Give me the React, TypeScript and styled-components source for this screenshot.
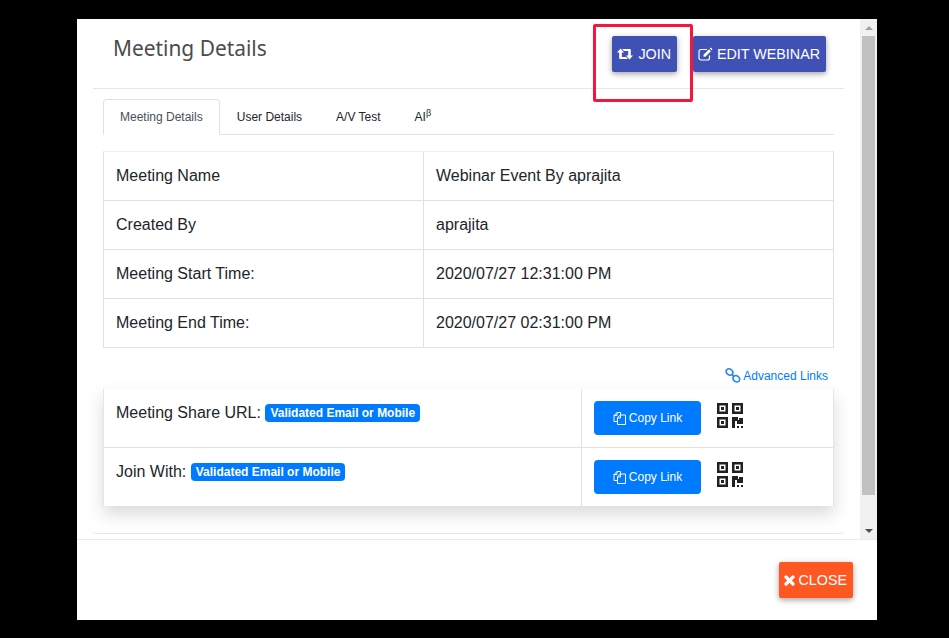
import { FC, ReactNode } from "react"
import styled, { createGlobalStyle } from "styled-components"

const GlobalStyle = createGlobalStyle`
    html, body {
        margin: 0;
        padding: 0;
        background: #000;
        font-family: "Liberation Sans", Arial, sans-serif;
        color: #212529;
    }
`

const Page = styled.div`
    position: relative;
    width: 949px;
    height: 638px;
    overflow: hidden;
    box-sizing: border-box;
    padding: 19px 72px 18px 77px;
    background: #000;
`

const Modal = styled.div`
    display: flex;
    flex-direction: column;
    width: 800px;
    height: 601px;
    background: #fff;
`

const ModalBody = styled.div`
    display: flex;
    height: 520px;
    overflow: hidden;
`

const ScrollArea = styled.div`
    flex: 1;
    padding: 0 16px;
`

const Card = styled.div`
    height: 514px;
    border-bottom: 1px solid #e4e6e9;
    border-radius: 0 0 4px 4px;
    box-shadow: 1px 0 1px -1px #eee, -1px 0 1px -1px #eee;
`

const CardHeader = styled.div`
    display: flex;
    justify-content: space-between;
    height: 70px;
    box-sizing: border-box;
    padding: 0 18px 0 20px;
    border-bottom: 1px solid #e6e6e6;
`

const Title = styled.h4`
    margin: 14px 0 0;
    font-family: "Noto Sans", sans-serif;
    font-size: 20.9px;
    line-height: 30px;
    font-weight: 400;
    color: #4b4b4b;
`

const HeaderActions = styled.div`
    display: flex;
    gap: 16px;
    padding-top: 17px;
`

const RaisedButton = styled.button<{ $bg: string }>`
    display: inline-flex;
    align-items: center;
    justify-content: center;
    gap: 4px;
    height: 36px;
    padding: 0 6px 0 5px;
    border: 0;
    border-radius: 2px;
    background: ${p => p.$bg};
    color: #fff;
    font-family: inherit;
    font-size: 14.3px;
    box-shadow: 0 2px 5px rgba(0, 0, 0, 0.26), 0 2px 8px rgba(0, 0, 0, 0.12);
`

const CardBody = styled.div`
    padding: 10px 10px 0;
`

const Tabs = styled.div`
    display: flex;
    height: 36px;
    box-sizing: border-box;
    border-bottom: 1px solid #dee2e6;
`

const Tab = styled.div<{ $active?: boolean }>`
    box-sizing: border-box;
    height: 36px;
    padding: 9px 16px 0;
    font-size: 12px;
    line-height: 16px;
    border: 1px solid ${p => (p.$active ? "#dee2e6" : "transparent")};
    border-bottom-color: ${p => (p.$active ? "#fff" : "transparent")};
    border-radius: 4px 4px 0 0;
    background: ${p => (p.$active ? "#fff" : "transparent")};
    color: ${p => (p.$active ? "#495057" : "#212529")};

    sup {
        font-size: 9px;
        line-height: 0;
    }
`

const DetailsTable = styled.div`
    margin-top: 16px;
    border: 1px solid #dee2e6;
    border-top-color: #eee;
`

const DetailRow = styled.div`
    display: grid;
    grid-template-columns: 319px 1fr;
    height: 49px;
    box-sizing: border-box;

    &:first-child {
        height: 48px;
    }

    & + & {
        border-top: 1px solid #dee2e6;
    }
`

const Cell = styled.div`
    padding: 0 12px;
    font-size: 16px;
    line-height: 48px;

    & + & {
        border-left: 1px solid #dee2e6;
    }
`

const AdvancedRow = styled.div`
    display: flex;
    justify-content: flex-end;
    align-items: center;
    gap: 2px;
    height: 41px;
    box-sizing: border-box;
    padding: 14px 6px 0 0;
    font-size: 12px;
    color: #007bff;
`

const LinksTable = styled.div`
    border: 1px solid #e3e5e8;
    border-width: 0 1px;
    box-shadow: 0 8px 16px rgba(0, 0, 0, 0.15);
    height: 117px;
`

const LinkRow = styled.div`
    display: grid;
    grid-template-columns: 477px 1fr;
    height: 58px;
    box-sizing: border-box;

    & + & {
        border-top: 1px solid #dee2e6;
        height: 59px;
    }
`

const LinkLabel = styled.div`
    padding: 14px 12px 0;
    font-size: 16px;
    line-height: 20px;
`

const Badge = styled.span`
    display: inline-block;
    padding: 0 5px;
    border-radius: 4px;
    background: #007bff;
    color: #fff;
    font-size: 12px;
    font-weight: 700;
    line-height: 18px;
    vertical-align: 1px;
`

const LinkActions = styled.div`
    display: flex;
    align-items: flex-start;
    gap: 16px;
    padding: 12px 12px 0;
    border-left: 1px solid #dee2e6;
`

const CopyButton = styled.button`
    display: inline-flex;
    align-items: center;
    justify-content: center;
    gap: 3px;
    width: 107px;
    height: 34px;
    padding: 0 0 1px;
    border: 0;
    border-radius: 4px;
    background: #007bff;
    color: #fff;
    font-family: inherit;
    font-size: 12px;
`

const QrIcon = styled.svg`
    width: 26px;
    height: 26px;
    margin-top: 2px;
`

const Scrollbar = styled.div`
    display: flex;
    flex-direction: column;
    align-items: center;
    width: 17px;
    background: #f1f1f1;
`

const ScrollArrow = styled.div<{ $down?: boolean }>`
    display: flex;
    align-items: center;
    justify-content: center;
    height: 17px;

    &::after {
        content: "";
        border-left: 4px solid transparent;
        border-right: 4px solid transparent;
        ${p =>
            p.$down
                ? "border-top: 4px solid #505050;"
                : "border-bottom: 4px solid #a3a3a3;"}
    }
`

const ScrollThumb = styled.div`
    width: 13px;
    height: 459px;
    background: #c1c1c1;
`

const ScrollGap = styled.div`
    flex: 1;
`

const Footer = styled.div`
    flex: 1;
    display: flex;
    justify-content: flex-end;
    align-items: flex-start;
    padding: 22px 24px 0 0;
    border-top: 1px solid #e9ecef;
`

// the red box somebody drew over the screenshot
const Annotation = styled.div`
    position: absolute;
    left: 593px;
    top: 24px;
    width: 100px;
    height: 78px;
    box-sizing: border-box;
    border: 3px solid #f5163f;
    border-radius: 2px;
    pointer-events: none;
`

const RetweetIcon: FC = () => (
    <svg width="17" height="12" viewBox="0 0 17 12" fill="#fff">
        <path d="M0 4.5L3.5.5 7 4.5H4.8V9H9l2 2H3a.8.8 0 0 1-.8-.8V4.5z" />
        <path d="M16 7.5l-3.5 4-3.5-4h2.2V3H7L5 1h8a.8.8 0 0 1 .8.8v5.7z" />
    </svg>
)

const EditIcon: FC = () => (
    <svg width="15" height="14" viewBox="0 0 15 14" fill="none">
        <path d="M11.5 8.5V11a2 2 0 0 1-2 2H3a2 2 0 0 1-2-2V4.5a2 2 0 0 1 2-2h6" stroke="#fff" strokeWidth="1.2" />
        <path d="M5.5 7.8L11 2.3l1.9 1.9-5.5 5.5H5.5z" fill="#fff" />
        <path d="M11.8 1.5l.7-.7h.6l1.2 1.2v.6l-.7.7z" fill="#fff" />
    </svg>
)

const CloseIcon: FC = () => (
    <svg width="11" height="11" viewBox="0 0 11 11" fill="none">
        <path d="M2 2l7 7M9 2l-7 7" stroke="#fff" strokeWidth="3.2" strokeLinecap="round" />
    </svg>
)

const FilesIcon: FC = () => (
    <svg width="13" height="14" viewBox="0 0 13 14" fill="none" stroke="#fff" strokeWidth="1">
        <path d="M4.5 10.5H1V4.5L4 1.5h3.5v2.5" />
        <path d="M4 1.5v3H1" />
        <path d="M4.5 6.5L7.5 4h5v9.5h-8z" />
        <path d="M7.5 4v3h-3" />
    </svg>
)

const QrCode: FC = () => (
    <QrIcon viewBox="0 0 26 26">
        <g fill="#212121">
            <path
                d="M0 0h11v11H0zM2.5 2.5v6h6v-6zM15 0h11v11H15zM17.5 2.5v6h6v-6zM0 14h11v11H0zM2.5 16.5v6h6v-6z"
                fillRule="evenodd"
            />
            <path d="M4 4h3v3H4zM19 4h3v3h-3zM4 18h3v3H4z" />
            <path d="M15 14h6v3h1v-2h4v6h-6v-3h-2v7h-3zM20 23h2v2h-2zM24 23h2v2h-2z" />
        </g>
    </QrIcon>
)

const ChainIcon: FC = () => (
    <svg width="16" height="15" viewBox="0 0 16 15" fill="none" stroke="#2b86f5" strokeWidth="1.7">
        <ellipse cx="4.5" cy="4" rx="3.6" ry="2.9" transform="rotate(35 4.5 4)" />
        <ellipse cx="11.3" cy="10.8" rx="3.6" ry="2.9" transform="rotate(35 11.3 10.8)" />
        <path d="M6.5 6l3 3" />
    </svg>
)

const Detail: FC<{ label: string; value: string }> = ({ label, value }) => (
    <DetailRow>
        <Cell>{label}</Cell>
        <Cell>{value}</Cell>
    </DetailRow>
)

const ShareLink: FC<{ label: ReactNode }> = ({ label }) => (
    <LinkRow>
        <LinkLabel>
            {label} <Badge>Validated Email or Mobile</Badge>
        </LinkLabel>
        <LinkActions>
            <CopyButton>
                <FilesIcon />
                Copy Link
            </CopyButton>
            <QrCode />
        </LinkActions>
    </LinkRow>
)

const App: FC = () => (
    <Page>
        <GlobalStyle />
        <Modal>
            <ModalBody>
                <ScrollArea>
                    <Card>
                        <CardHeader>
                            <Title>Meeting Details</Title>
                            <HeaderActions>
                                <RaisedButton $bg="#3f51b5">
                                    <RetweetIcon />
                                    JOIN
                                </RaisedButton>
                                <RaisedButton $bg="#3f51b5">
                                    <EditIcon />
                                    EDIT WEBINAR
                                </RaisedButton>
                            </HeaderActions>
                        </CardHeader>
                        <CardBody>
                            <Tabs>
                                <Tab $active>Meeting Details</Tab>
                                <Tab>User Details</Tab>
                                <Tab>A/V Test</Tab>
                                <Tab>
                                    AI<sup>β</sup>
                                </Tab>
                            </Tabs>
                            <DetailsTable>
                                <Detail label="Meeting Name" value="Webinar Event By aprajita" />
                                <Detail label="Created By" value="aprajita" />
                                <Detail label="Meeting Start Time:" value="2020/07/27 12:31:00 PM" />
                                <Detail label="Meeting End Time:" value="2020/07/27 02:31:00 PM" />
                            </DetailsTable>
                            <AdvancedRow>
                                <ChainIcon />
                                Advanced Links
                            </AdvancedRow>
                            <LinksTable>
                                <ShareLink label="Meeting Share URL:" />
                                <ShareLink label="Join With:" />
                            </LinksTable>
                        </CardBody>
                    </Card>
                </ScrollArea>
                <Scrollbar>
                    <ScrollArrow />
                    <ScrollThumb />
                    <ScrollGap />
                    <ScrollArrow $down />
                </Scrollbar>
            </ModalBody>
            <Footer>
                <RaisedButton $bg="#ff5722">
                    <CloseIcon />
                    CLOSE
                </RaisedButton>
            </Footer>
        </Modal>
        <Annotation />
    </Page>
)

export default App
